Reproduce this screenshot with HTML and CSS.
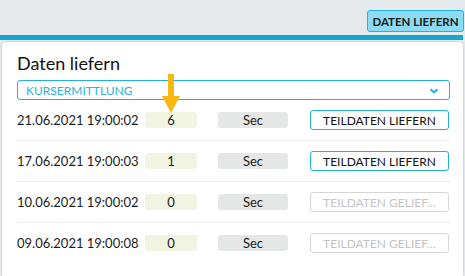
FILE: index.html
```html
<!DOCTYPE html>
<html lang="de">
<head>
    <meta charset="UTF-8">
    <title>Daten liefern</title>
    <link rel="stylesheet" href="styles.css">
</head>
<body>
    <div class="topbar">
        <button class="btn-main">DATEN LIEFERN</button>
    </div>
    <div class="accent"></div>
    <div class="panel">
        <h2>Daten liefern</h2>
        <div class="select">
            <span>KURSERMITTLUNG</span>
            <svg class="chevron" width="10" height="6" viewBox="0 0 10 6">
                <polyline points="1.5,1.2 5,4.5 8.5,1.2" fill="none" stroke="#1eaedb" stroke-width="2"/>
            </svg>
        </div>
        <div class="rows">
            <div class="row">
                <span class="date">21.06.2021 19:00:02</span>
                <span class="count">6</span>
                <span class="unit">Sec</span>
                <button class="btn-part">TEILDATEN LIEFERN</button>
            </div>
            <div class="row">
                <span class="date">17.06.2021 19:00:03</span>
                <span class="count">1</span>
                <span class="unit">Sec</span>
                <button class="btn-part">TEILDATEN LIEFERN</button>
            </div>
            <div class="row">
                <span class="date">10.06.2021 19:00:02</span>
                <span class="count">0</span>
                <span class="unit">Sec</span>
                <button class="btn-part" disabled>TEILDATEN GELIEF…</button>
            </div>
            <div class="row last">
                <span class="date">09.06.2021 19:00:08</span>
                <span class="count">0</span>
                <span class="unit">Sec</span>
                <button class="btn-part" disabled>TEILDATEN GELIEF…</button>
            </div>
        </div>
        <!-- hint arrow pointing at the first count -->
        <svg class="arrow" width="18" height="40" viewBox="0 0 18 40">
            <rect x="6" y="0" width="6" height="23" fill="#f9b80f"/>
            <polygon points="0,22 18,22 9,39" fill="#f9b80f"/>
        </svg>
    </div>
</body>
</html>
```

FILE: styles.css
```css
body {
    margin: 0;
    height: 276px;
    background-color: #e6e9ec;
    font-family: Lato, "Open Sans", sans-serif;
    color: #1c1c1c;
    overflow: hidden;
}

.topbar {
    height: 35px;
    display: flex;
    justify-content: flex-end;
    align-items: flex-start;
    padding-right: 1px;
    box-sizing: border-box;
}

.btn-main {
    margin-top: 10px;
    width: 97px;
    height: 22px;
    padding: 0;
    background-color: #8adbf3;
    border: 1px solid #22b1da;
    border-radius: 3px;
    font-family: inherit;
    font-size: 11.5px;
    font-weight: bold;
    color: #1a1a1a;
}

.accent {
    height: 5px;
    margin-right: 2px;
    background-color: #12a6d1;
}

.panel {
    position: relative;
    margin: 2px 2px 0 2px;
    height: 224px;
    padding: 10px 13px 0 15px;
    background-color: #fff;
    border-radius: 4px 4px 0 0;
    box-shadow: 0 0 2px rgba(0, 0, 0, 0.25);
}

h2 {
    margin: 0 0 6px 0;
    font-size: 18px;
    font-weight: normal;
    line-height: 22px;
    color: #111;
}

.select {
    height: 18px;
    display: flex;
    align-items: center;
    justify-content: space-between;
    padding: 0 10px 0 8px;
    border: 1px solid #22b1da;
    border-radius: 3px;
    font-size: 12px;
    color: #2ab2df;
}

.chevron {
    margin-top: 1px;
}

.row {
    display: grid;
    grid-template-columns: 128px 73px 92px 139px;
    align-items: center;
    height: 40px;
    border-bottom: 1px solid #ececec;
    font-size: 13px;
}

.row.last {
    border-bottom: none;
}

.count {
    width: 52px;
    height: 16px;
    line-height: 16px;
    text-align: center;
    background-color: #f1f4e0;
    border-radius: 3px;
}

.unit {
    width: 70px;
    height: 16px;
    line-height: 16px;
    text-align: center;
    background-color: #e5e6e6;
    border-radius: 3px;
}

.btn-part {
    width: 139px;
    height: 20px;
    padding: 0;
    background-color: #fff;
    border: 1px solid #22b1da;
    border-radius: 3px;
    font-family: inherit;
    font-size: 12px;
    color: #111;
}

.btn-part:disabled {
    border-color: #d6d6d6;
    color: #c4c4c4;
}

.arrow {
    position: absolute;
    left: 160px;
    top: 32px;
}
```
